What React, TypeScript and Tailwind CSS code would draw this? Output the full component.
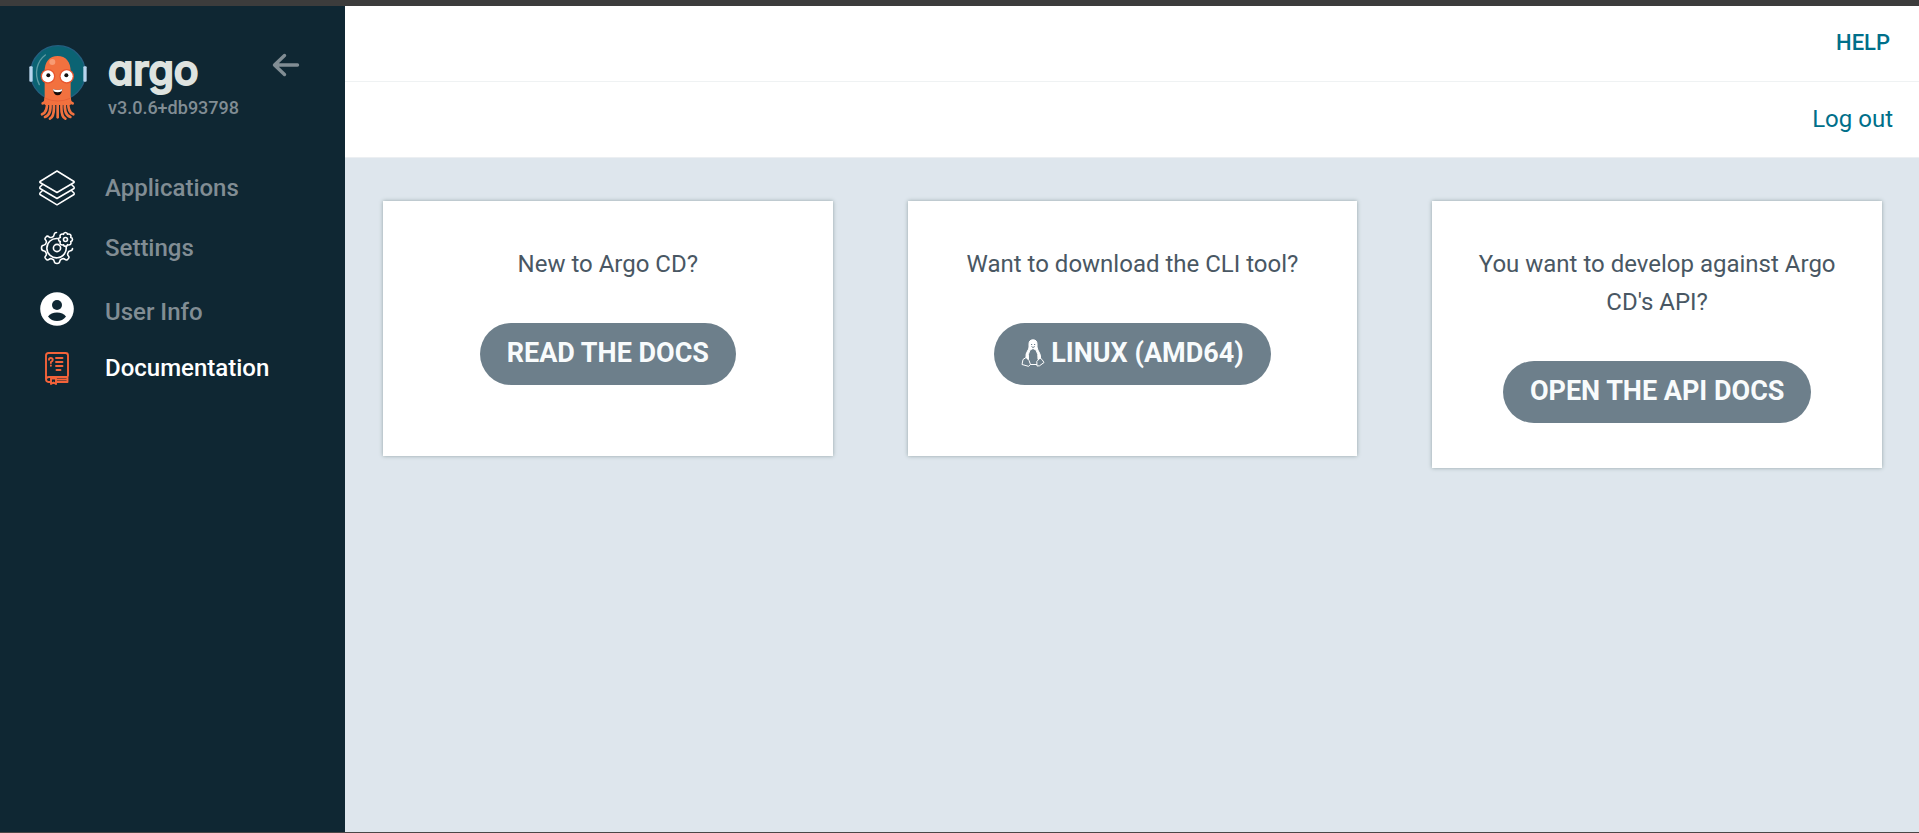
import React from "react";

function ArgoMascot() {
  return (
    <svg viewBox="0 0 174 225" className="h-[75px] w-[58px] shrink-0" aria-hidden="true">
      <circle cx="87" cy="84" r="82" fill="#0b6373" stroke="#245f80" strokeWidth="4" />
      <path d="M49 30C24 48 14 86 31 119" fill="none" stroke="#5d9ba4" strokeWidth="4" strokeLinecap="round" />
      <rect x="1" y="64" width="10" height="46" rx="3" fill="#b9d5ee" />
      <rect x="163" y="64" width="10" height="46" rx="3" fill="#b9d5ee" />
      <path d="M47 82C46 50 62 33 86 33S126 50 125 82V180H47Z" fill="#f2713f" />
      <g fill="none" stroke="#f2713f" strokeWidth="8" strokeLinecap="round">
        <path d="M50 160Q50 174 41 175M122 160Q122 174 131 175" />
        <path d="M54 168Q56 202 39 208M118 168Q116 202 133 208" />
        <path d="M64 170Q68 210 48 216M108 170Q104 210 124 216" />
        <path d="M74 170Q78 214 63 221M98 170Q94 214 109 221" />
        <path d="M86 170V217" />
      </g>
      <path d="M49 160Q86 176 124 160" fill="none" stroke="#e35b33" strokeWidth="2" />
      <circle cx="70" cy="51" r="9" fill="#f89b73" />
      <circle cx="57" cy="94" r="22" fill="#e9552e" />
      <circle cx="113" cy="94" r="22" fill="#e9552e" />
      <circle cx="57" cy="94" r="18" fill="#fff" />
      <circle cx="113" cy="94" r="18" fill="#fff" />
      <circle cx="58" cy="91" r="6" fill="#111" />
      <circle cx="112" cy="91" r="6" fill="#111" />
      <path d="M72 132Q86 138 100 132Q98 151 86 151T72 132Z" fill="#160c0a" />
      <path d="M72 132Q86 138 100 132L98 139Q86 145 74 139Z" fill="#fff" />
    </svg>
  );
}

function BackArrow() {
  return (
    <svg viewBox="0 0 28 24" className="h-6 w-7" fill="none" stroke="currentColor" strokeWidth="3.4" strokeLinecap="round" strokeLinejoin="round" aria-hidden="true">
      <path d="M12.5 2.5 2.5 12l10 9.500M3 12h22.500" />
    </svg>
  );
}

function LayersIcon() {
  return (
    <svg viewBox="0 0 36 36" className="size-9" fill="none" stroke="#fff" strokeWidth="1.500" strokeLinejoin="round" strokeLinecap="round" aria-hidden="true">
      <path d="M18 1 35 11.500Q35.400 12 35 12.500L18 22.500 1 12.500Q.600 12 1 11.500Z" />
      <path d="M3.500 14.500 1 17Q.600 18 1 18.500L18 28.500 35 18.500Q35.400 18 35 17L32.500 14.500" />
      <path d="M3.500 20.500 1 23Q.600 24 1 24.500L18 34.800 35 24.500Q35.400 24 35 23L32.500 20.500" />
    </svg>
  );
}

function GearsIcon() {
  return (
    <svg viewBox="0 0 34 34" className="size-[34px]" fill="none" stroke="#fff" strokeWidth="1.600" strokeLinejoin="round" strokeLinecap="round" aria-hidden="true">
      <path d="M16.500 1.500Q14.500 1.500 14.200 3.500Q14 5.800 12 6.200Q10.500 7 9 5.800Q7.300 4.300 6 6Q4.200 7.500 5.600 9Q7 10.500 6 12.200Q5.600 14 3.500 14.300Q1.500 14.500 1.500 17T3.500 19.700Q5.600 20 6 21.800Q7 23.500 5.600 25Q4.200 26.500 6 28Q7.500 29.800 9 28.400Q10.500 27 12.200 28Q14 28.500 14.300 30.500Q14.500 32.500 17 32.500T19.700 30.500Q20 28.500 21.800 28Q23.500 27 25 28.400Q26.500 29.800 28 28Q29.800 26.500 28.400 25Q27 23.500 28 21.800Q28.500 20 30.500 19.700Q32.500 19.500 32.500 17.500" />
      <path d="M17.500 7.500A9.700 9.700 0 1 0 26 15" />
      <circle cx="17" cy="17" r="3.600" />
      <circle cx="25.500" cy="8.500" r="2" />
      <path d="M25.500 1.500Q27.300 1.500 27.500 3.300Q29 2.500 30.400 3.600Q31.500 5 30.700 6.500Q32.500 6.700 32.500 8.500T30.700 10.500Q31.500 12 30.400 13.400Q29 14.500 27.500 13.700Q27.300 15.500 25.500 15.500T23.500 13.700Q22 14.500 20.600 13.400Q19.500 12 20.300 10.500Q18.500 10.300 18.500 8.500T20.300 6.500Q19.500 5 20.600 3.600Q22 2.500 23.500 3.300Q23.700 1.500 25.500 1.500Z" />
    </svg>
  );
}

function UserIcon() {
  return (
    <svg viewBox="0 0 34 34" className="size-[34px]" aria-hidden="true">
      <circle cx="17" cy="17" r="16.800" fill="#fff" />
      <circle cx="17" cy="13" r="5" fill="#0f2733" />
      <path d="M8 24.500Q11 20.500 17 20.500T26 24.500Q22.500 29 17 29T8 24.500Z" fill="#0f2733" />
    </svg>
  );
}

function BookIcon() {
  return (
    <svg viewBox="0 0 24 33" className="h-[33px] w-6" fill="none" stroke="#f4633a" strokeWidth="1.900" strokeLinejoin="round" strokeLinecap="round" aria-hidden="true">
      <path d="M5.500 30H3.500Q1 30 1 27V3.500Q1 1 3.500 1H20.500Q23 1 23 3.500V23.500Q23 25 21.500 25H4Q1 25 1 27.500M11.500 30H22.500V25.500M11 27.500H22" />
      <path d="M6 26.500V32L8.500 30.500 11 32V26.500Z" />
      <path d="M4 7.700Q4 6 5.800 6T7.800 7.800Q7.800 9 5.900 10V11M5.900 13.500V13.700M11 6H17.500M11 10H17.500M11 14H17.500M11.500 18H15.500" />
    </svg>
  );
}

function Penguin() {
  return (
    <svg viewBox="0 0 24 28" className="h-7 w-6 shrink-0" fill="none" stroke="#fff" strokeWidth="1" strokeLinejoin="round" aria-hidden="true">
      <path
        d="M8 8V5Q8 .8 12 .8T16 5V8Q16.500 11 18.500 14Q20 17 19.500 19L17 20.500Q17.500 15 15 11L12 9.500 9 11Q6.500 15 7.500 20.500L5 18Q4.500 15 6.500 12Q8 10 8 8Z"
        fill="#fff"
      />
      <path d="M10 5.500H11.200M13 5.500H14.200M10.500 7.500 12 8.500 13.800 7.500" stroke="#6d7f8b" />
      <path d="M5 18.500 2 20.500 1 25.500 7.500 27.300 9.500 25.500 8 21.500ZM19 19 21 20.500 23 23.500 18.500 26.800 16 27 15.800 22.500ZM9.500 25.500H16" />
    </svg>
  );
}

const navItems = [
  { label: "Applications", icon: <LayersIcon />, row: "h-[60px] items-center" },
  { label: "Settings", icon: <GearsIcon />, row: "h-[60px] items-center" },
  { label: "User Info", icon: <UserIcon />, row: "h-12 items-end" },
  { label: "Documentation", icon: <BookIcon />, row: "mt-3 h-[60px] items-center", active: true },
];

const cards = [
  { text: "New to Argo CD?", action: "READ THE DOCS" },
  { text: "Want to download the CLI tool?", action: "LINUX (AMD64)", icon: <Penguin /> },
  { text: "You want to develop against Argo CD's API?", action: "OPEN THE API DOCS" },
];

export default function App() {
  return (
    <div className="flex min-h-screen flex-col border-t-6 border-b border-t-[#3c3c3c] border-b-[#4a4646] bg-[#dee6ed] font-[Roboto,sans-serif]">
      <div className="flex grow">
        <aside className="w-[345px] shrink-0 bg-[#0f2733]">
          <div className="flex h-[152px] items-start pt-[39px] pl-[29px]">
            <ArgoMascot />
            <div className="ml-[21px]">
              <div className="h-[51px] font-[Inter,sans-serif] text-[41px] leading-[50px] font-medium text-[#dee3e0] [font-feature-settings:'cv11'] [-webkit-text-stroke:2px_#dee3e0]">
                argo
              </div>
              <div className="text-[18px] leading-6 font-medium text-[#818d94]">v3.0.6+db93798</div>
            </div>
            <button type="button" aria-label="Collapse sidebar" className="mt-2 ml-[33px] text-[#818d94]">
              <BackArrow />
            </button>
          </div>
          <nav>
            {navItems.map((item) => (
              <a
                key={item.label}
                href="#"
                className={`flex pl-[39px] text-2xl leading-7 font-medium ${item.row} ${item.active ? "text-white" : "text-[#818d94]"}`}
              >
                <span className="mr-[30px] flex w-9 justify-center">{item.icon}</span>
                {item.label}
              </a>
            ))}
          </nav>
        </aside>
        <div className="flex min-w-0 grow flex-col">
          <header className="bg-white text-[#006f8a]">
            <div className="flex h-[76px] items-center justify-end border-b border-[#eff2f3] pr-[29px] pb-[2px]">
              <h1 className="text-[22px] leading-7 font-medium">HELP</h1>
            </div>
            <div className="flex h-[76px] items-center justify-end border-b border-[#eceff2] pr-[26px] pb-[2px]">
              <a href="#" className="text-2xl">
                Log out
              </a>
            </div>
          </header>
          <main className="grid grid-cols-3 items-start gap-[75px] pt-[43px] pr-[37px] pl-[38px]">
            {cards.map((card) => (
              <section
                key={card.action}
                className="flex min-h-[255px] flex-col items-center bg-white px-9 pt-11 pb-[45px] text-center shadow-[0_0_4px_#93a3a6]"
              >
                <p className="text-2xl leading-[38px] text-[#495763]">{card.text}</p>
                <a
                  href="#"
                  className="mt-10 flex h-[62px] items-center gap-[6px] rounded-full bg-[#6d7f8b] px-[27px] pb-[2px] text-[27px] font-bold text-[#f8fbfc]"
                >
                  {card.icon}
                  {card.action}
                </a>
              </section>
            ))}
          </main>
        </div>
      </div>
    </div>
  );
}
